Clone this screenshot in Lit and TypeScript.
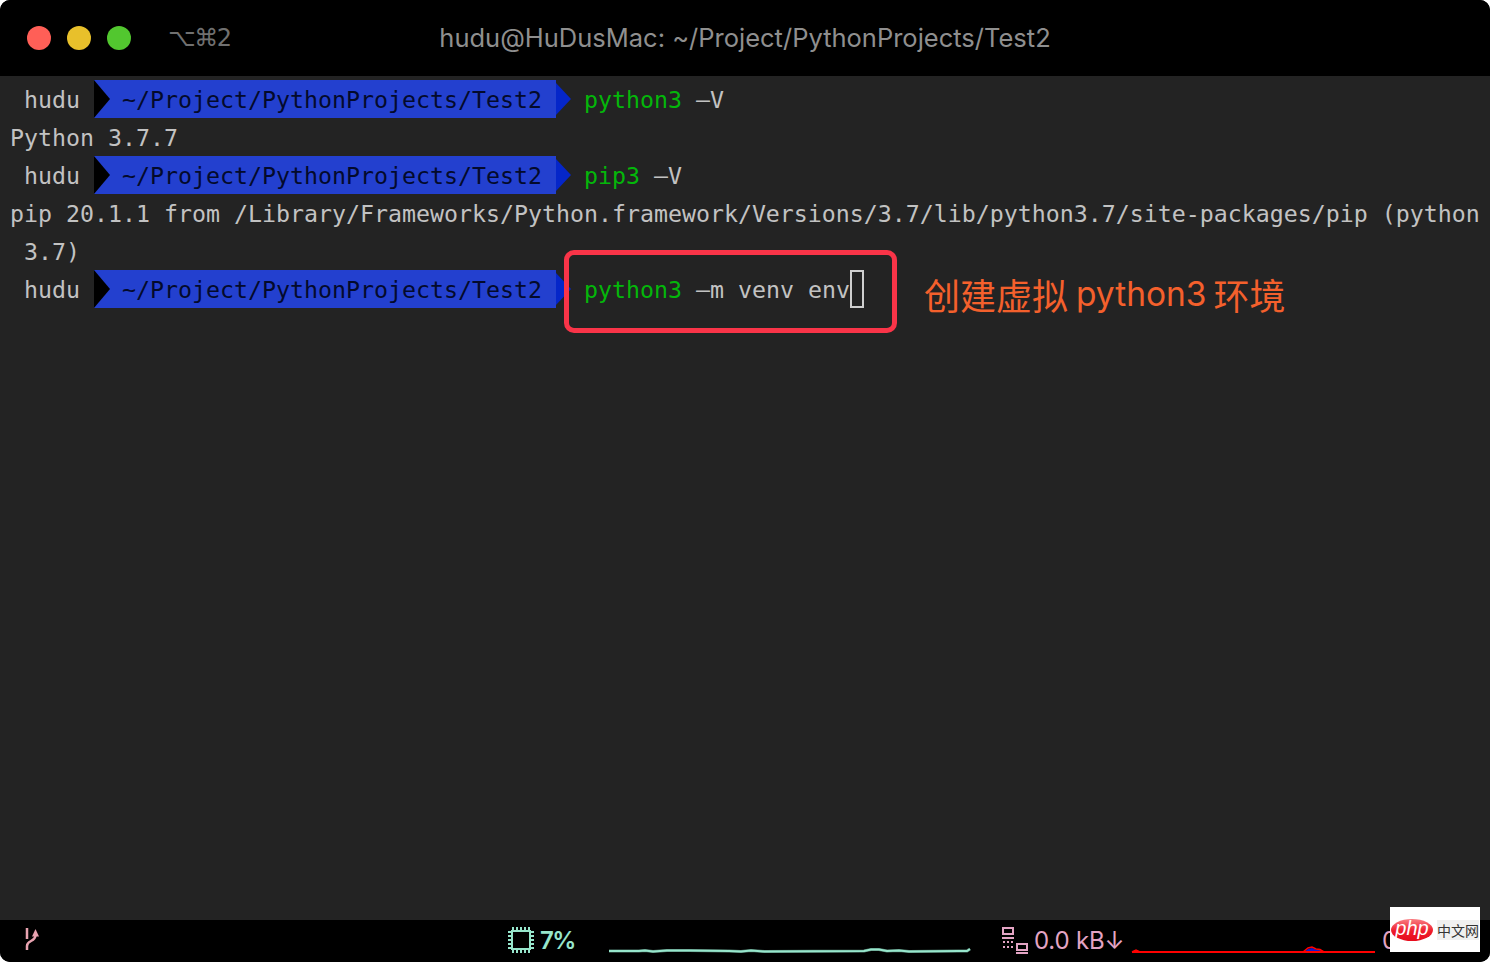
import { LitElement, html, css } from "lit";
import { customElement } from "lit/decorators.js";

const PATH = "~/Project/PythonProjects/Test2";
const CPU_LINE = "M0 7 H30 L36 6.500 L44 7.500 L58 6.500 L80 6.500 L120 7 L132 7.500 L142 6.500 L155 7.500 L255 7 L262 5.500 L270 5.500 L278 7 L290 6.500 L300 7.500 L350 7 L358 7 L361 5";

@customElement("app-root")
export class AppRoot extends LitElement {
  static styles = css`
    :host { display: block; width: 1490px; height: 962px; background: #fff; overflow: hidden; }
    .win { position: relative; width: 1490px; height: 962px; display: flex; flex-direction: column; background: #000; border-radius: 10px; overflow: hidden; }
    .title { height: 76px; flex: none; display: flex; align-items: center; background: #000; position: relative; padding-left: 27px; font-family: "Liberation Sans", Arial, sans-serif; }
    .lights { display: flex; gap: 16px; }
    .light { width: 24px; height: 24px; border-radius: 50%; }
    .red { background: #ff5f57; } .yellow { background: #e8c02b; } .green { background: #52c72f; }
    .shortcut { margin-left: 37px; font: 24px "DejaVu Sans", sans-serif; color: #707070; letter-spacing: -1.500px; }
    .name { position: absolute; left: 0; right: 0; top: 23px; line-height: 30px; text-align: center; font-family: "Inter", "Liberation Sans", sans-serif; font-size: 25.500px; color: #8f8f8f; }
    .term { flex: 1; background: #232323; padding: 4px 0 0 10px; font-family: "DejaVu Sans Mono", monospace; font-size: 23.250px; color: #c2c2c2; position: relative; }
    .row { height: 38px; line-height: 40px; display: flex; align-items: stretch; white-space: pre; }
    .hudu { width: 84px; padding-left: 14px; box-sizing: border-box; }
    .seg { position: relative; width: 462px; padding-left: 28px; box-sizing: border-box; background: #2340cf; color: #030a2c; }
    .seg svg.start { position: absolute; left: 0; top: 0; }
    .end { width: 28px; flex: none; }
    .cmd { color: #c2c2c2; }
    .g { color: #04b70a; }
    .cursor { display: inline-block; width: 14px; height: 38px; box-sizing: border-box; border: 2px solid #cfcfcf; }
    .curwrap { display: flex; align-items: flex-start; }
    .box { position: absolute; left: 564px; top: 174px; width: 333px; height: 83px; box-sizing: border-box; border: 5px solid #f93448; border-radius: 10px; }
    .note { position: absolute; left: 924px; top: 194px; display: flex; font-family: "Noto Sans CJK SC", "Noto Sans", sans-serif; font-size: 36px; line-height: 48px; color: #f4602c; white-space: nowrap; }
    .note .en { font-family: "Inter", "Noto Sans", sans-serif; font-size: 33.500px; margin: 0 7px 0 8px; }
    .status { height: 42px; flex: none; background: #000; position: relative; font-family: "Inter", "Liberation Sans", sans-serif; font-size: 24px; }
    .status > * { position: absolute; }
    .branch { left: 24px; top: 7px; }
    .cpu { left: 540px; top: 6px; color: #97e6cc; line-height: 30px; font-weight: 600; letter-spacing: -1.500px; }
    .cpuicon { left: 508px; top: 7px; }
    .cpuchart { left: 609px; top: 24px; }
    .net { left: 1034px; top: 6px; color: #e3a4c4; line-height: 30px; white-space: nowrap; letter-spacing: -0.200px; }
    .neticon { left: 1001px; top: 7px; }
    .netchart { left: 1131px; top: 20px; }
    .more { left: 1382px; top: 6px; color: #e3a4c4; line-height: 30px; }
    .wm { position: absolute; left: 1390px; top: 907px; width: 90px; height: 45px; background: #fff; display: flex; align-items: center; gap: 4px; }
    .php { width: 42px; height: 22px; margin-left: 1px; flex: none; border-radius: 50%; background: linear-gradient(#f97e83, #ee1c2b 55%, #e70b1c); color: #fff; font: italic 400 20px/19px "Liberation Sans", sans-serif; text-align: center; }
    .cn { font: 14px "Noto Sans CJK SC", sans-serif; color: #333; white-space: nowrap; background: #f0f0f0; }
  `;

  private prompt(cmd: unknown) {
    return html`<div class="row">
      <span class="hudu">hudu</span>
      <span class="seg"><svg class="start" width="17" height="38"><path d="M0 0 L16 19 L0 38 Z" fill="#000"/></svg>${PATH}</span>
      <svg class="end" width="28" height="38"><path d="M0 3 L15 19 L0 35 Z" fill="#0526c9"/></svg>
      ${cmd}
    </div>`;
  }

  render() {
    return html`<div class="win">
      <div class="title">
        <div class="lights"><span class="light red"></span><span class="light yellow"></span><span class="light green"></span></div>
        <span class="shortcut">⌥⌘2</span>
        <span class="name">hudu@HuDusMac: ~/Project/PythonProjects/Test2</span>
      </div>
      <div class="term">
        ${this.prompt(html`<span class="cmd"><span class="g">python3</span> –V</span>`)}
        <div class="row">Python 3.7.7</div>
        ${this.prompt(html`<span class="cmd"><span class="g">pip3</span> –V</span>`)}
        <div class="row">pip 20.1.1 from /Library/Frameworks/Python.framework/Versions/3.7/lib/python3.7/site-packages/pip (python</div>
        <div class="row"> 3.7)</div>
        ${this.prompt(html`<span class="cmd curwrap"><span class="g">python3</span> –m venv env<span class="cursor"></span></span>`)}
        <div class="box"></div>
        <div class="note"><span>创建虚拟</span><span class="en">python3</span><span>环境</span></div>
      </div>
      <div class="status">
        <svg class="branch" width="16" height="28" fill="none" stroke="#e8a3b0" stroke-width="2.500"><path d="M3 1 V12"/><path d="M3 23 V19 C3 13 11.500 15 11.500 8"/><path d="M8 9.500 L11.500 2 L15 9.500 Z" fill="#e8a3b0" stroke="none"/></svg>
        <svg class="cpuicon" width="26" height="26" fill="none" stroke="#97e6cc" stroke-width="2"><rect x="4" y="4" width="18" height="18" stroke-width="2"/><path d="M5 0V3M9 0V3M13 0V3M17 0V3M21 0V3M5 23V26M9 23V26M13 23V26M17 23V26M21 23V26M0 5H3M0 9H3M0 13H3M0 17H3M0 21H3M23 5H26M23 9H26M23 13H26M23 17H26M23 21H26"/></svg>
        <span class="cpu">7%</span>
        <svg class="cpuchart" width="362" height="10" fill="none"><path d="${CPU_LINE}" stroke="#4f7d6e" stroke-width="3"/><path d="${CPU_LINE}" stroke="#97e6cc" stroke-width="2"/></svg>
        <svg class="neticon" width="28" height="28" fill="none" stroke="#e3a4c4" stroke-width="2"><rect x="2" y="1" width="10" height="6"/><path d="M1 11H13M2 15H4M6 15H8M10 15H12M2 20H4M6 20H8M10 20H12"/><rect x="16" y="17" width="10" height="6"/><path d="M15 26H27"/></svg>
        <span class="net">0.0 kB↓</span>
        <svg class="netchart" width="246" height="16" fill="none"><path d="M173 12 L177 9 L181 8 L185 9.500 L189 10 L193 12 Z" fill="#1019d0"/><path d="M172 12 L177 8 L181 7 L185 9 L189 9.500 L193 12 M1 12 L5 10 L9 12" stroke="#f00" stroke-width="1.500"/><path d="M1 12 H244" stroke="#f00" stroke-width="2"/></svg>
        <span class="more">0</span>
      </div>
      <div class="wm"><span class="php">php</span><span class="cn">中文网</span></div>
    </div>`;
  }
}
